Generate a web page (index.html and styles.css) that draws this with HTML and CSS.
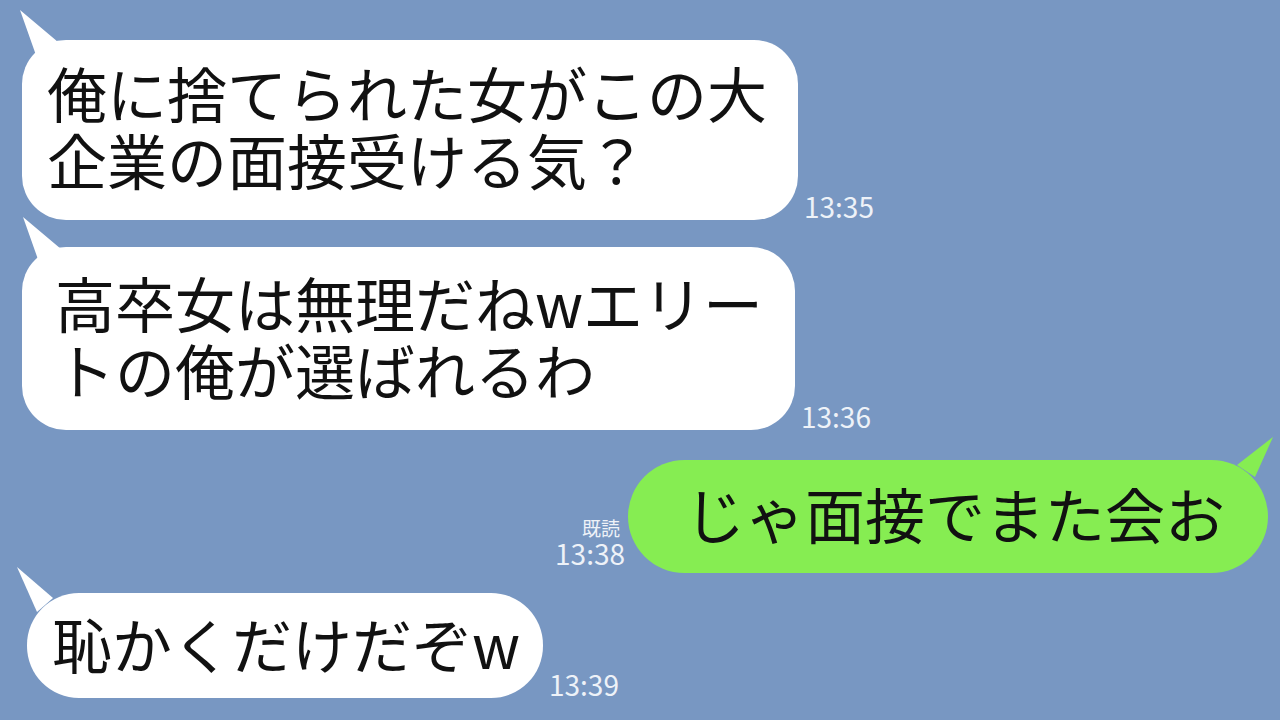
FILE: index.html
```html
<!DOCTYPE html>
<html lang="ja">
<head>
    <meta charset="utf-8">
    <title>トーク</title>
    <link rel="stylesheet" href="styles.css">
</head>
<body>
    <div class="chat">
        <div class="row row-1">
            <div class="bubble bubble-1">俺に捨てられた女がこの大<br>企業の面接受ける気？</div>
            <div class="meta"><span class="time">13:35</span></div>
        </div>

        <div class="row row-2">
            <div class="bubble bubble-2">高卒女は無理だねwエリー<br>トの俺が選ばれるわ</div>
            <div class="meta"><span class="time">13:36</span></div>
        </div>

        <div class="row row-3 mine">
            <div class="meta">
                <span class="read">既読</span>
                <span class="time">13:38</span>
            </div>
            <div class="bubble bubble-3">じゃ面接でまた会お</div>
        </div>

        <div class="row row-4">
            <div class="bubble bubble-4">恥かくだけだぞw</div>
            <div class="meta"><span class="time">13:39</span></div>
        </div>
    </div>
</body>
</html>
```

FILE: styles.css
```css
html, body { margin: 0; height: 100%; }
body { background: #7897c2; font-family: "Noto Sans CJK JP", "Noto Sans", sans-serif; overflow: hidden; }
.chat { display: flex; flex-direction: column; width: 1280px; height: 720px; }
.row { display: flex; align-items: flex-end; }
.row-1 { margin-top: 40px; padding-left: 22px; }
.row-2 { margin-top: 27px; padding-left: 22px; }
.row-3 { margin-top: 30px; padding-right: 12px; justify-content: flex-end; }
.row-4 { margin-top: 20px; padding-left: 27px; }

.bubble { position: relative; box-sizing: border-box; background: #fff; color: #111; font-size: 60px; line-height: 67px; white-space: nowrap; }
.bubble::before { content: ""; position: absolute; left: -2px; top: -30px; width: 40px; height: 50px; background: inherit; clip-path: polygon(0 0, 38px 32px, 17px 48px); }
.bubble-1 { width: 776px; padding: 18px 0 28px 25px; border-radius: 44px; }
.bubble-2 { width: 773px; padding: 21px 0 28px 33px; border-radius: 44px; }
.bubble-2::before { left: 1px; }
.bubble-3 { width: 640px; padding: 19px 0 27px 57px; border-radius: 57px; background: #86ed52; }
.bubble-3::before { left: auto; right: -5px; top: -23px; width: 36px; height: 40px; clip-path: polygon(36px 0, 0 28px, 18px 40px); }
.bubble-4 { width: 516px; padding: 16px 0 22px 25px; border-radius: 52px; }
.bubble-4::before { left: -10px; top: -26px; width: 38px; height: 46px; clip-path: polygon(0 0, 36px 31px, 20px 45px); }

.meta { display: flex; flex-direction: column; align-items: flex-end; color: #eef2f8; margin: 0 0 0 6px; }
.mine .meta { margin: 0 3px 6px 0; }
.time { font-size: 28px; line-height: 28px; }
.read { font-size: 19px; line-height: 22px; margin-right: 5px; }
```
